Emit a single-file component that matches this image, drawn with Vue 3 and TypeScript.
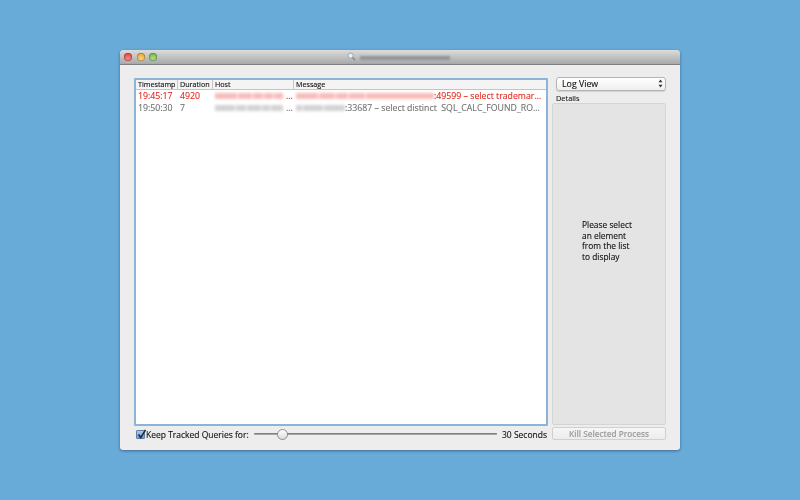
<script setup lang="ts">
interface Row {
  time: string
  duration: string
  port: string
  hostBars: number[]
  msgBars: number[]
  cls: string
}
const rows: Row[] = [
  { time: '19:45:17', duration: '4920', port: ':49599 – select trademar...', hostBars: [22, 14, 10, 9, 9], msgBars: [22, 16, 12, 16, 68], cls: 'red' },
  { time: '19:50:30', duration: '7', port: ':33687 – select distinct  SQL_CALC_FOUND_RO...', hostBars: [20, 10, 14, 8, 12], msgBars: [6, 20, 21], cls: 'grey' },
]
const lines = ['Please select', 'an element', 'from the list', 'to display']
</script>

<template>
  <div class="page">
    <div class="window">
      <div class="titlebar">
        <div class="lights">
          <span class="light l-red"></span>
          <span class="light l-yellow"></span>
          <span class="light l-green"></span>
        </div>
        <div class="title">
          <svg class="lens" width="9" height="9" viewBox="0 0 9 9">
            <circle cx="3.6" cy="3.6" r="2.6" fill="#e8eef4" stroke="#9aa6b2" stroke-width="1" />
            <path d="M5.6 5.6 L8.2 8.2" stroke="#8a8a8a" stroke-width="1.5" />
          </svg>
          <span class="title-blur"></span>
        </div>
      </div>
      <div class="body">
        <div class="left">
          <div class="table">
            <div class="thead">
              <div class="c c-time">Timestamp</div>
              <div class="c c-dur">Duration</div>
              <div class="c c-host">Host</div>
              <div class="c c-msg">Message</div>
            </div>
            <div v-for="r in rows" :key="r.time" class="row" :class="r.cls">
              <div class="c c-time">{{ r.time }}</div>
              <div class="c c-dur">{{ r.duration }}</div>
              <div class="c c-host">
                <span class="bars">
                  <i v-for="(w, i) in r.hostBars" :key="i" :style="{ width: w + 'px' }"></i>
                </span>
                <span class="dots">...</span>
              </div>
              <div class="c c-msg">
                <span class="bars">
                  <i v-for="(w, i) in r.msgBars" :key="i" :style="{ width: w + 'px' }"></i>
                </span>
                <span class="port">{{ r.port }}</span>
              </div>
            </div>
          </div>
          <div class="footer">
            <label class="check">
              <span class="box">
                <svg width="11" height="11" viewBox="0 0 11 11">
                  <path d="M2.5 5.5 L4.8 8.6 L9.5 0.8" fill="none" stroke="#1c2a3c" stroke-width="1.6" />
                </svg>
              </span>
              <span class="check-text">Keep Tracked Queries for:</span>
            </label>
            <div class="slider">
              <span class="track"></span>
              <span class="knob"></span>
            </div>
            <span class="secs">30 Seconds</span>
          </div>
        </div>
        <div class="right">
          <div class="select">
            <span>Log View</span>
            <svg width="5" height="9" viewBox="0 0 5 9">
              <path d="M2.5 0.5 L4.5 3.2 H0.5 Z M2.5 8.5 L4.5 5.8 H0.5 Z" fill="#333" />
            </svg>
          </div>
          <div class="details-label">Details</div>
          <div class="details">
            <div class="placeholder">
              <div v-for="l in lines" :key="l">{{ l }}</div>
            </div>
          </div>
          <button class="kill" disabled>Kill Selected Process</button>
        </div>
      </div>
    </div>
  </div>
</template>

<style>
html, body { margin: 0; padding: 0; }
</style>

<style scoped>
.page {
  width: 800px;
  height: 500px;
  box-sizing: border-box;
  padding: 50px 120px;
  background: #69abd8;
  font-family: "Open Sans", "DejaVu Sans", sans-serif;
  overflow: hidden;
}
.window {
  width: 560px;
  height: 400px;
  background: #ededed;
  border-radius: 4px 4px 3px 3px;
  box-shadow: 0 1px 3px rgba(20, 50, 80, 0.55);
  display: flex;
  flex-direction: column;
  overflow: hidden;
  filter: blur(0.25px);
  -webkit-text-stroke: 0.12px;
}
.titlebar {
  height: 14px;
  flex: none;
  background: linear-gradient(#dcdcdc, #a8a8a8);
  border-bottom: 1px solid #7f7f7f;
  display: flex;
  align-items: center;
  position: relative;
}
.lights {
  display: flex;
  gap: 4.5px;
  padding-left: 4px;
}
.light {
  width: 8px;
  height: 8px;
  border-radius: 50%;
  display: block;
  box-shadow: inset 0 0 0 0.5px rgba(0, 0, 0, 0.35);
}
.l-red { background: radial-gradient(circle at 50% 70%, #f58a84, #d0322c); }
.l-yellow { background: radial-gradient(circle at 50% 70%, #fbd67a, #d8922a); }
.l-green { background: radial-gradient(circle at 50% 70%, #addf80, #5fa83c); }
.title {
  position: absolute;
  left: 227px;
  top: 2px;
  display: flex;
  align-items: center;
  gap: 4px;
}
.title-blur {
  display: block;
  width: 90px;
  height: 4px;
  margin-top: 2px;
  background: #84868a;
  filter: blur(1px);
  opacity: 0.75;
}
.lens { display: block; }
.body {
  flex: 1;
  min-height: 0;
  display: flex;
  padding: 13px 14px 9px 14px;
  gap: 4px;
}
.left {
  width: 414px;
  flex: none;
  display: flex;
  flex-direction: column;
}
.table {
  height: 348px;
  flex: none;
  box-sizing: border-box;
  border: 2px solid #8db3d6;
  border-radius: 1px;
  background: #fff;
}
.thead {
  height: 9px;
  display: flex;
  align-items: center;
  font-size: 7.2px;
  color: #111;
  background: #f4f4f4;
  border-bottom: 1px solid #c4c4c4;
}
.thead .c { border-right: 1px solid #c8c8c8; height: 9px; line-height: 9px; }
.thead .c-msg { border-right: 0; }
.c {
  box-sizing: border-box;
  padding-left: 2px;
  white-space: nowrap;
  overflow: hidden;
  flex: none;
}
.c-time { width: 42px; }
.c-dur { width: 35px; }
.c-host { width: 81px; }
.c-msg { width: 252px; }
.row {
  height: 12px;
  display: flex;
  align-items: center;
  font-size: 8.75px;
  line-height: 12px;
}
.row .c { display: flex; align-items: center; }
.row.red { color: #e62a22; }
.row.grey { color: #727272; }
.bars {
  display: flex;
  gap: 1px;
  filter: blur(1.4px);
}
.bars i {
  display: block;
  height: 6px;
  background: currentColor;
  opacity: 0.32;
}
.dots { padding-left: 3px; }
.port { white-space: pre; }
.footer {
  height: 16px;
  flex: none;
  display: flex;
  align-items: center;
  font-size: 8.5px;
  color: #111;
}
.check {
  width: 120px;
  flex: none;
  box-sizing: border-box;
  display: flex;
  align-items: center;
  gap: 1px;
  padding-left: 2px;
}
.check-text { white-space: nowrap; }
.box {
  width: 9px;
  height: 9px;
  flex: none;
  box-sizing: border-box;
  border: 1px solid #5e7fa8;
  border-radius: 1px;
  background: linear-gradient(#a9c8e8, #6d9fd3);
  display: block;
  position: relative;
}
.box svg { position: absolute; left: -1px; top: -2px; }
.slider {
  position: relative;
  width: 243px;
  flex: none;
  height: 12px;
  display: flex;
  align-items: center;
}
.track {
  display: block;
  width: 100%;
  height: 2px;
  border-radius: 1px;
  background: #a6a6a6;
  box-shadow: inset 0 1px 0 #7e7e7e;
}
.knob {
  position: absolute;
  left: 23px;
  top: 0.5px;
  width: 11px;
  height: 11px;
  box-sizing: border-box;
  border-radius: 50%;
  border: 1px solid #8e8e8e;
  background: linear-gradient(#fff, #dcdcdc);
}
.secs { margin-left: 5px; white-space: nowrap; }
.right {
  width: 114px;
  flex: none;
  display: flex;
  flex-direction: column;
}
.select {
  margin: -1px 0 0 4px;
  width: 110px;
  height: 13.5px;
  flex: none;
  box-sizing: border-box;
  border: 1px solid #b4b4b4;
  border-radius: 3px;
  background: linear-gradient(#fff, #efefef);
  box-shadow: 0 1px 1px rgba(0, 0, 0, 0.12);
  display: flex;
  align-items: center;
  justify-content: space-between;
  padding: 0 2px 0 5px;
  font-size: 8.8px;
  color: #111;
}
.select svg { display: block; }
.details-label {
  margin-top: 2.5px;
  padding-left: 4px;
  height: 10px;
  flex: none;
  line-height: 10px;
  font-size: 7.4px;
  color: #222;
}
.details {
  height: 322px;
  flex: none;
  box-sizing: border-box;
  border: 1px solid #d4d4d4;
  border-radius: 2px;
  background: #e4e4e4;
  padding: 116px 0 0 29px;
}
.placeholder {
  font-size: 8.4px;
  line-height: 10.7px;
  color: #111;
}
.kill {
  margin: 2px 0 0;
  width: 114px;
  height: 13px;
  flex: none;
  box-sizing: border-box;
  border: 1px solid #d0d0d0;
  border-radius: 2px;
  background: linear-gradient(#f6f6f6, #ececec);
  font-family: inherit;
  font-size: 8.2px;
  font-weight: 600;
  color: #a0a0a0;
  padding: 0 0 1px;
  white-space: nowrap;
}
</style>
